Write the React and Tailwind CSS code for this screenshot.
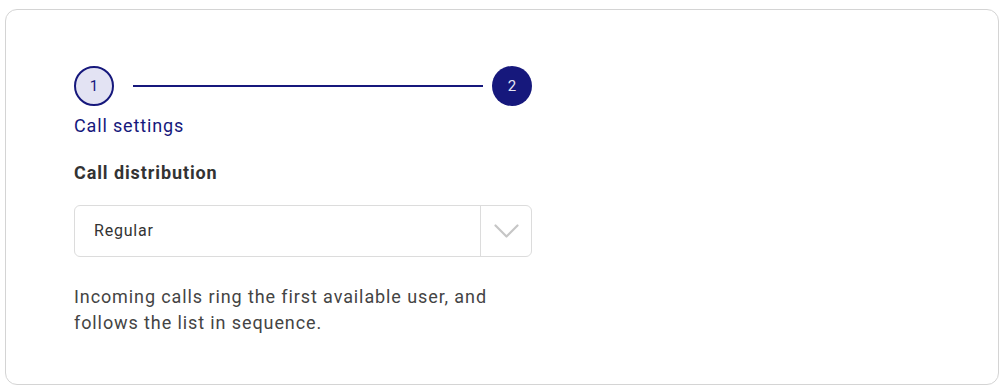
import React from 'react';

export default function App() {
    return (
        <div className="bg-white w-[1004px] h-[390px] pt-[9px] px-[5px] font-['Roboto',sans-serif]">
            <div className="h-[376px] border border-[#d4d4d4] rounded-xl pl-[68px] pt-[56px]">
                {/* Stepper */}
                <div className="flex items-center w-[458px]">
                    <div className="w-10 h-10 rounded-full border-2 border-[#16187c] bg-[#e3e3f3] flex items-center justify-center text-[15px] text-[#16187c]">
                        1
                    </div>
                    <div className="flex-1 h-[2px] bg-[#16187c] ml-[19px] mr-[9px]" />
                    <div className="w-10 h-10 rounded-full bg-[#16187c] flex items-center justify-center text-[15px] text-[#e6e6f4]">
                        2
                    </div>
                </div>
                <div className="mt-[7px] text-[18px] leading-[26px] tracking-[0.85px] text-[#16187c]">Call settings</div>

                {/* Distribution */}
                <div className="mt-[22px] text-[18px] leading-[24px] tracking-[0.9px] font-bold text-[#333]">Call distribution</div>
                <div className="mt-[20px] w-[458px] h-[52px] border border-[#dcdcdc] rounded-md flex items-center">
                    <div className="flex-1 pl-[19px] text-[16px] tracking-[0.8px] text-[#333]">Regular</div>
                    <div className="w-[51px] h-full border-l border-[#dcdcdc] flex items-center justify-center">
                        <svg width="25" height="15" viewBox="0 0 25 15" fill="none">
                            <path d="M1.5 1.5 L12.5 12.5 L23.5 1.5" stroke="#c6c6c6" strokeWidth="2.2" strokeLinecap="round" strokeLinejoin="round" />
                        </svg>
                    </div>
                </div>
                <p className="mt-[27px] w-[458px] text-[18px] leading-[26px] tracking-[0.9px] text-[#444]">
                    Incoming calls ring the first available user, and follows the list in sequence.
                </p>
            </div>
        </div>
    );
}
